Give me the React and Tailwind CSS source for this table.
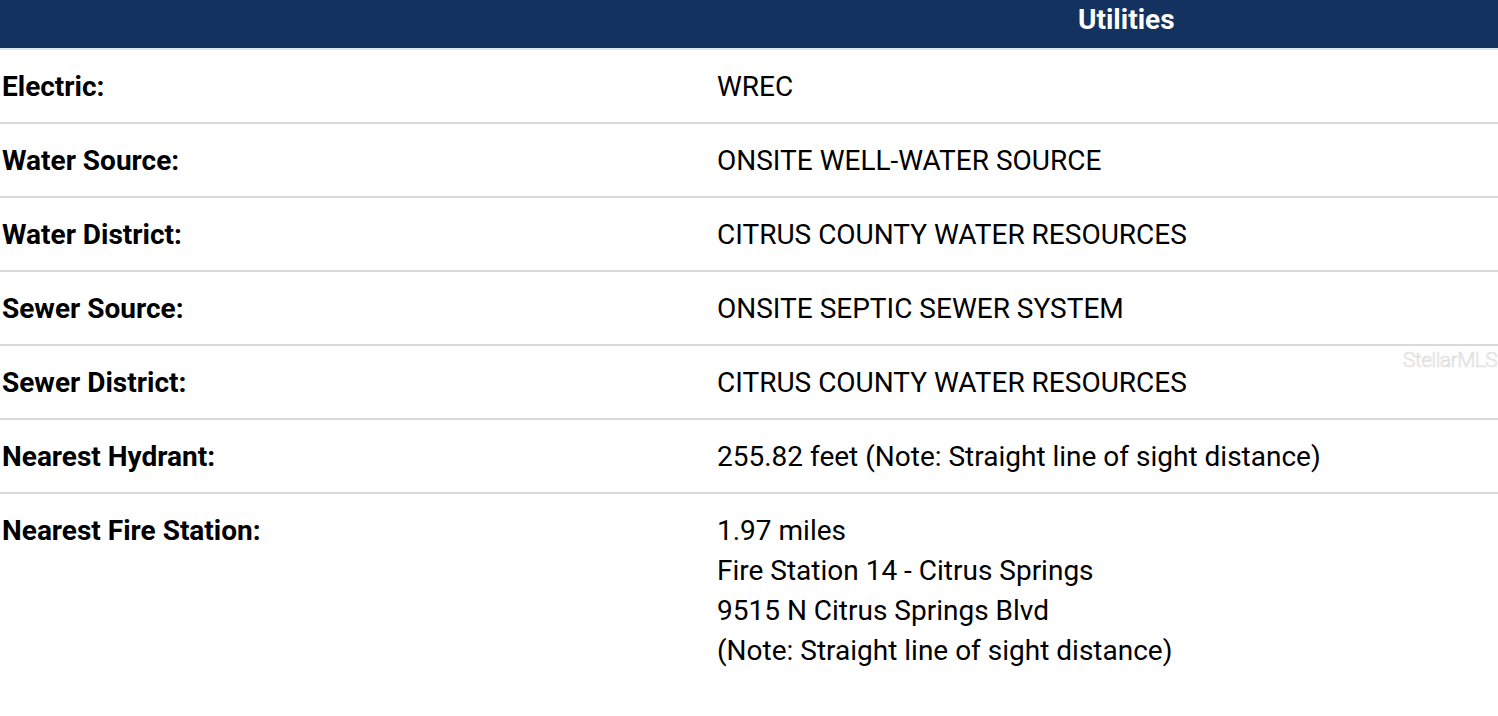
export default function App() {
  const rows = [
    ["Electric:", ["WREC"]],
    ["Water Source:", ["ONSITE WELL-WATER SOURCE"]],
    ["Water District:", ["CITRUS COUNTY WATER RESOURCES"]],
    ["Sewer Source:", ["ONSITE SEPTIC SEWER SYSTEM"]],
    ["Sewer District:", ["CITRUS COUNTY WATER RESOURCES"]],
    ["Nearest Hydrant:", ["255.82 feet (Note: Straight line of sight distance)"]],
    [
      "Nearest Fire Station:",
      [
        "1.97 miles",
        "Fire Station 14 - Citrus Springs",
        "9515 N Citrus Springs Blvd",
        "(Note: Straight line of sight distance)",
      ],
    ],
  ];
  return (
    <div
      className="relative w-[1498px] h-[716px] bg-white text-black overflow-hidden"
      style={{ fontFamily: "Roboto, 'Liberation Sans', sans-serif" }}
    >
      <div className="h-[50px] bg-[#13325f] flex items-center pb-[8px] border-b-2 border-[#dce6f0]">
        <div className="pl-[1078px] text-white font-bold text-[28px] leading-none">Utilities</div>
      </div>
      {rows.map(([label, vals], i) => (
        <div
          key={i}
          className={`flex pt-[17px] pb-[15px] ${i < rows.length - 1 ? "border-b-2 border-[#dadada]" : ""}`}
        >
          <div className="w-[717px] pl-[2px] font-bold text-[28px] leading-[40px]">{label}</div>
          <div className="flex-1 text-[28px] leading-[40px]">
            {vals.map((v, j) => (
              <div key={j}>{v}</div>
            ))}
          </div>
        </div>
      ))}
      <div
        className="absolute left-[1403px] top-[345px] text-[21px] font-light text-white tracking-tight"
        style={{ WebkitTextStroke: "0.7px #dcdcdc" }}
      >
        StellarMLS
      </div>
    </div>
  );
}
